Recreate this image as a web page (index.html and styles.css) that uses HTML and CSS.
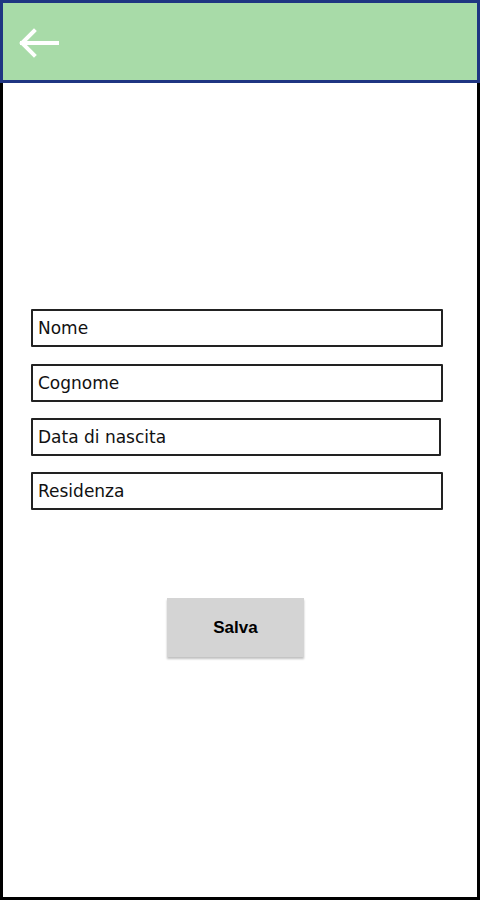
FILE: index.html
```html
<!DOCTYPE html>
<html>
<head>
<meta charset="utf-8">
<link rel="stylesheet" href="styles.css">
</head>
<body>
<div class="screen">
  <header class="topbar">
    <svg class="back" width="42" height="30" viewBox="0 0 42 30">
      <path d="M5 15 L40 15 M17 3 L5 15 L17 27" fill="none" stroke="#fff" stroke-width="4" stroke-linecap="square" stroke-linejoin="miter"/>
    </svg>
  </header>
  <main class="content">
    <div class="fields">
      <div class="field">Nome</div>
      <div class="field">Cognome</div>
      <div class="field narrow">Data di nascita</div>
      <div class="field">Residenza</div>
    </div>
    <div class="actions">
      <button class="save">Salva</button>
    </div>
  </main>
</div>
</body>
</html>
```
FILE: styles.css
```css
html, body {
  margin: 0;
  padding: 0;
  background: #fff;
}
.screen {
  width: 480px;
  height: 900px;
  box-sizing: border-box;
  border: 3px solid #000;
  border-top: none;
  display: flex;
  flex-direction: column;
  position: relative;
}
.topbar {
  height: 83px;
  box-sizing: border-box;
  margin: 0 -3px;
  background: #a8dba8;
  border: 3px solid #1f3582;
  display: flex;
  align-items: center;
  padding-left: 14px;
}
.back {
  display: block;
  margin-top: 2px;
}
.content {
  flex: 1;
  padding-top: 226px;
}
.fields {
  display: flex;
  flex-direction: column;
  gap: 16px;
  padding-left: 28px;
}
.field {
  width: 412px;
  height: 38px;
  box-sizing: border-box;
  border: 2px solid #222;
  border-radius: 1px;
  font-family: "DejaVu Sans", sans-serif;
  font-size: 17px;
  color: #111;
  display: flex;
  align-items: center;
  padding-left: 5px;
  padding-bottom: 1px;
}
.field:nth-child(2) { margin-top: 1px; }
.field.narrow { width: 410px; }
.actions {
  display: flex;
  padding-left: 164px;
  padding-top: 88px;
}
.save {
  width: 137px;
  height: 59px;
  border: none;
  border-radius: 0;
  background: #d4d4d4;
  box-shadow: 0 2px 2px rgba(0,0,0,0.25);
  font-family: "Liberation Sans", Arial, sans-serif;
  font-weight: bold;
  font-size: 17px;
  color: #000;
  padding: 0;
}
```
